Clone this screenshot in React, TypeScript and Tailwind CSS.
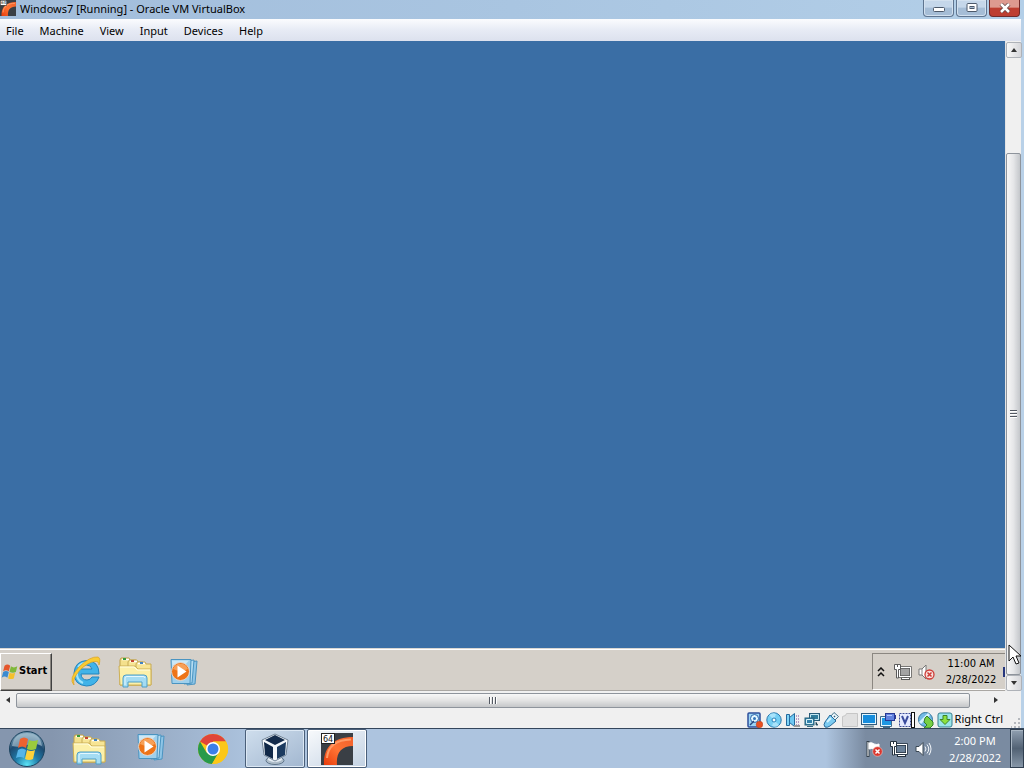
import type { ReactNode } from "react";

const menus = ["File", "Machine", "View", "Input", "Devices", "Help"];

function MachineIcon({ className }: { className: string }) {
  return (
    <svg viewBox="0 0 32 32" className={className} aria-hidden="true">
      <defs>
        <linearGradient id="pipe" x1="0" y1="1" x2="1" y2="0">
          <stop offset="0" stopColor="#e83c0c" />
          <stop offset="0.5" stopColor="#ff7434" />
          <stop offset="1" stopColor="#f0602c" />
        </linearGradient>
      </defs>
      <rect width="32" height="32" fill="#3a3f45" />
      <path d="M3 32C2 15 12 4 32 4v9C20 13 15 20 16 32z" fill="url(#pipe)" />
      <path d="M6 25C7 13 15 7 30 6.500" fill="none" stroke="#ff9a66" strokeWidth="2" />
      <rect x="0.5" y="0.5" width="13" height="10" fill="#fff" stroke="#222" />
      <text x="2" y="8.500" fontSize="8" fontFamily="DejaVu Sans, sans-serif" fill="#111">
        64
      </text>
    </svg>
  );
}

function FolderIcon() {
  return (
    <svg viewBox="0 0 34 32" className="h-8 w-[34px]" aria-hidden="true">
      <path d="M2 29V4l1-2h8l1 2h6v25z" fill="#f4e08c" stroke="#bd9f4c" />
      <path d="M10 29V6l1-2h8l1 2h5v23z" fill="#f7e594" stroke="#c7aa55" />
      <path d="M18 29V8l1-2h8l1 2h5v21z" fill="#f7e594" stroke="#c7aa55" />
      <path d="M4 3.500h7M12 5.500h7M20 7.500h7" stroke="#fff" strokeWidth="1.500" />
      <path d="M5 3h3" stroke="#37993b" strokeWidth="2" />
      <path d="M13 5h3" stroke="#c34731" strokeWidth="2" />
      <path d="M22 7h3" stroke="#3f83c4" strokeWidth="2" />
      <path d="M1 10h16l3 3h13v16H2z" fill="#fcf0a9" stroke="#cdb057" />
      <path d="M2 11h14l3 3h13" fill="none" stroke="#fffde0" />
      <path d="M5 31v-9q0-3 3-3h18q3 0 3 3v9h-5v-5H10v5z" fill="#a4dcf3" stroke="#4f9fc7" />
      <path d="M7 29v-7q0-1.500 2-1.500h16q2 0 2 1.500" fill="none" stroke="#e4f8ff" />
    </svg>
  );
}

function MediaIcon() {
  return (
    <svg viewBox="0 0 30 28" className="h-7 w-[30px]" aria-hidden="true">
      <path d="M20 4l8-1-2 23-8 1z" fill="#8fc5e6" stroke="#4a94c1" />
      <path d="M17 3l8-1-2 23-8 1z" fill="#b5dcf2" stroke="#4a94c1" />
      <path d="M2 1.500h20l-1 24H3z" fill="#9fd0ec" stroke="#4a94c1" />
      <path d="M3 2.500h17L4 20z" fill="#cbe8f7" />
      <circle cx="11.500" cy="13.500" r="9" fill="#ee7418" stroke="#e3d6cc" />
      <path d="M4 11a8 8 0 0 1 15 0q-7 4-15 0" fill="#f7a058" />
      <path d="M8.500 7.500v12l9-6z" fill="#fff" />
    </svg>
  );
}

function ExplorerIcon() {
  return (
    <svg viewBox="0 0 30 32" className="h-8 w-[30px]" aria-hidden="true">
      <path
        d="M28 18H10q.5 6 6 6 3.500 0 5-3h7q-3 9-12.500 9Q3 29 3 17 4 5 16 4.500 28 5 28 18zM21 13q-1-4-5.500-4T10 13z"
        fill="#41b3e8"
        stroke="#2384bd"
        fillRule="evenodd"
      />
      <path d="M7 11Q11 6 17 7M6 16q-1 8 6 11" fill="none" stroke="#a0e4fa" strokeWidth="2" />
      <path
        d="M3 29Q-3 23 8 11 19 0 27 1q3 1 1 8 0-4-4-3.500Q17 6 9 14 1 23 3 29z"
        fill="#f9cb32"
        stroke="#dba01c"
        strokeWidth="0.700"
      />
    </svg>
  );
}

function WindowsFlag({ className }: { className: string }) {
  return (
    <svg viewBox="0 0 24 22" className={className} aria-hidden="true">
      <path d="M5 2q4-3 8 0l-2 8q-4-3-8 0z" fill="#e5562b" />
      <path d="M14 3q4 3 9 0l-2 8q-4 2-9 0z" fill="#7fb83a" />
      <path d="M3 11q4-3 8 0l-2 8q-4-3-8 0z" fill="#3b8bd0" />
      <path d="M12 12q4 2 8 0l-2 8q-4 2-8 0z" fill="#f5c02c" />
    </svg>
  );
}

function StartOrb() {
  return (
    <svg viewBox="0 0 38 38" className="h-[38px] w-[38px]" aria-hidden="true">
      <defs>
        <radialGradient id="orb" cx="0.5" cy="0.95" r="0.85">
          <stop offset="0" stopColor="#5be3f6" />
          <stop offset="0.4" stopColor="#1f7ba8" />
          <stop offset="0.75" stopColor="#1d4a70" />
          <stop offset="1" stopColor="#6d94ad" />
        </radialGradient>
      </defs>
      <circle cx="19" cy="19" r="17.500" fill="url(#orb)" stroke="#1c4460" />
      <path d="M4 16Q6 3 19 3t15 13q-8-4-15-1-8 3-15 1z" fill="#b3ccd9" opacity="0.6" />
      <path d="M12 9q4-3 8 0l-2 9q-4-3-8 0z" fill="#ee6230" />
      <path d="M21 10q4 2 9 0l-2 9q-5 2-9 0z" fill="#9bca3c" />
      <path d="M10 20q4-3 8 0l-2 8q-4-2-8 0z" fill="#55b5e8" />
      <path d="M19 20q4 2 8 0l-2 9q-4 2-8 0z" fill="#fcd13b" />
    </svg>
  );
}

function ChromeIcon() {
  return (
    <svg viewBox="0 0 32 32" className="h-8 w-8" aria-hidden="true">
      <circle cx="16" cy="16" r="15" fill="#fbc719" />
      <path d="M16 16L3 8.500A15 15 0 0 1 29 8.500H16z" fill="#e0453a" />
      <path d="M3 8.500A15 15 0 0 0 15 31l6.500-11.500L9.500 19.500z" fill="#279a4a" />
      <path d="M16 8.500h13A15 15 0 0 1 15 31l7.500-12z" fill="#fbc719" />
      <circle cx="16" cy="16" r="7" fill="#fff" />
      <circle cx="16" cy="16" r="5.500" fill="#3c7fe8" />
    </svg>
  );
}

function VirtualBoxIcon() {
  return (
    <svg viewBox="0 0 30 32" className="h-8 w-[30px]" aria-hidden="true">
      <ellipse cx="15" cy="27.500" rx="9" ry="4" fill="#aebdca" stroke="#60768b" />
      <ellipse cx="15" cy="26" rx="7" ry="3" fill="#e6eef5" />
      <path d="M15 1l13 6-2 15-11 6-11-6L2 7z" fill="#f4f8fb" stroke="#718497" />
      <path d="M15 2l10 5-10 5L5 7z" fill="#142c4c" />
      <path d="M4 9l9 5v12l-8-4z" fill="#102848" />
      <path d="M26 9l-9 5v12l8-4z" fill="#1c3b60" />
    </svg>
  );
}

function NetworkIcon({ light = false }: { light?: boolean }) {
  const ink = light ? "#25323f" : "#5a5a5a";
  return (
    <svg viewBox="0 0 18 16" className="h-4 w-[18px]" aria-hidden="true">
      <path d="M7 15h9M11.500 12v2" stroke={ink} strokeWidth="3" />
      <rect x="5.500" y="3.500" width="11" height="9" fill={light ? "#6b8199" : "#a3a3a3"} stroke={ink} strokeWidth="2.500" />
      <rect x="5.500" y="3.500" width="11" height="9" fill="none" stroke="#fff" />
      <path d="M8 14.500h7" stroke="#fff" />
      <path d="M0.500 0.500h6v5h-2V14H2.500V5.500h-2z" fill="#fff" stroke={ink} />
      <path d="M3.500 0v3" stroke={ink} />
    </svg>
  );
}

function MutedIcon() {
  return (
    <svg viewBox="0 0 17 16" className="h-4 w-[17px]" aria-hidden="true">
      <path d="M1 5h3l4-4v14l-4-4H1z" fill="#fff" stroke="#777" />
      <path d="M4 5v6" stroke="#888" />
      <circle cx="11.500" cy="10.500" r="4.500" fill="#f7dedb" stroke="#cf3c37" strokeWidth="1.300" />
      <path d="M9.500 8.500l4 4m0-4l-4 4" stroke="#cf3c37" strokeWidth="1.500" />
    </svg>
  );
}

function FlagIcon() {
  return (
    <svg viewBox="0 0 17 16" className="h-4 w-[17px]" aria-hidden="true">
      <path d="M2 0v16" stroke="#34404b" strokeWidth="3" />
      <path d="M2 1v14M3 2q3-1 5 1 3 1 5 0v6q-3 1-5-1-2-1-5 0z" fill="#fff" stroke="#fff" />
      <circle cx="11.500" cy="10.500" r="4.800" fill="#da352d" stroke="#f2c9c4" strokeWidth="0.600" />
      <path d="M9.500 8.500l4 4m0-4l-4 4" stroke="#fff" strokeWidth="1.500" />
    </svg>
  );
}

function SpeakerIcon() {
  return (
    <svg viewBox="0 0 17 16" className="h-4 w-[17px]" aria-hidden="true">
      <path d="M1 5.500h3l4-4v13l-4-4H1z" fill="#fff" stroke="#3b4854" />
      <path d="M10 5.500q2 2.500 0 5M12 3.500q3.500 4.500 0 9M14 2q4 6 0 12" fill="none" stroke="#f3f7fb" />
    </svg>
  );
}

// Status bar indicators, each drawn on a 16px grid.
const indicators: { name: string; icon: ReactNode }[] = [
  {
    name: "Hard disks",
    icon: (
      <>
        <rect x="1" y="1" width="12" height="14" rx="1" fill="#9cd5f5" stroke="#2e4f9b" strokeWidth="1.500" />
        <circle cx="7.500" cy="6.500" r="4" fill="#e4f7ff" stroke="#2863a8" />
        <circle cx="7.500" cy="6.500" r="1.500" fill="#3375bb" />
        <path d="M3 13l4-4" stroke="#2b477c" strokeWidth="1.500" />
        <circle cx="12.500" cy="12.500" r="3.300" fill="#e85020" stroke="#b8411f" strokeWidth="0.500" />
      </>
    ),
  },
  {
    name: "Optical drives",
    icon: (
      <>
        <circle cx="8" cy="8" r="7.200" fill="#74cff4" stroke="#2878ad" />
        <path d="M8 8L3 3q4-3 7-1zM8 8l5 5q-3 3-7 1z" fill="#a8e3fb" />
        <circle cx="8" cy="8" r="2" fill="#f4fdff" stroke="#2980b8" />
      </>
    ),
  },
  {
    name: "Audio",
    icon: (
      <>
        <path d="M1.500 2.500h3v11h-3z" fill="#80d3f6" stroke="#246a9e" />
        <path d="M4.500 5.500l5-4v13l-5-4z" fill="#6fc8f2" stroke="#246a9e" />
        <path d="M11.500 3v10M13.500 3v10" stroke="#b79ac4" strokeDasharray="2 1" />
        <path d="M9 14h6" stroke="#999" strokeWidth="2" />
      </>
    ),
  },
  {
    name: "Network",
    icon: (
      <>
        <rect x="5.500" y="1.500" width="10" height="7" fill="#2f7d9c" stroke="#285c79" />
        <path d="M6.500 2.500h8v5h-8z" fill="none" stroke="#c5e8f2" />
        <rect x="1" y="6" width="9" height="7" fill="#3583ac" stroke="#276078" />
        <path d="M2.500 7.500h6v4h-6z" fill="none" stroke="#d8f4fa" />
        <path d="M3 14.500h6M12 10v3h2" stroke="#356b82" />
      </>
    ),
  },
  {
    name: "USB",
    icon: (
      <>
        <path d="M8 4l3-3.500 4.500 4L12 8z" fill="#eef6fa" stroke="#47758c" />
        <path d="M7 3l6 6-6 5q-3 2-5 1-2-2 0-5z" fill="#7ccbf1" stroke="#286b9b" />
        <path d="M4 10l4-4" stroke="#d3f4ff" strokeWidth="2" />
        <path d="M11 4l1 1" stroke="#325b75" strokeWidth="1.500" />
      </>
    ),
  },
  {
    name: "Shared folders",
    icon: <path d="M0.500 4.500l3-1 1-2h11v13H0.500z" fill="#e0e0e0" stroke="#c6c6c6" />,
  },
  {
    name: "Display",
    icon: (
      <>
        <rect x="0.500" y="1.500" width="15" height="11" fill="#e3f7ff" stroke="#315b7d" />
        <rect x="2" y="3" width="12" height="8" fill="#168ddd" />
        <path d="M3 14.500h10" stroke="#77909d" strokeWidth="2" />
      </>
    ),
  },
  {
    name: "Recording",
    icon: (
      <>
        <rect x="1.500" y="5.500" width="10" height="8" fill="#1f98e3" stroke="#e3f7ff" />
        <path d="M0.500 4.500h11v10h-11zM3 15.500h7" fill="none" stroke="#3f6b8c" />
        <rect x="5.500" y="1.500" width="9" height="7" fill="#6383df" stroke="#283994" />
        <path d="M7 3.500h5" stroke="#b3c4ff" />
        <path d="M15.500 3v4" stroke="#283994" />
      </>
    ),
  },
  {
    name: "Virtualization",
    icon: (
      <>
        <rect x="0.500" y="1.500" width="11" height="13" fill="#e4eaff" stroke="#3c4d99" strokeDasharray="2 1" />
        <path d="M3 4l3 7 3-7" fill="none" stroke="#394b9d" strokeWidth="2" />
        <rect x="12.500" y="0.500" width="3" height="15" fill="#fff" stroke="#111" />
      </>
    ),
  },
  {
    name: "Mouse integration",
    icon: (
      <>
        <circle cx="7.500" cy="7.500" r="7" fill="#73bae5" stroke="#35759b" />
        <path d="M2 11L11 2" stroke="#d5f2ff" strokeWidth="3" />
        <path d="M7 6l2-2 6 6v3l-3 3H6l3-3-3-3z" fill="#77d045" stroke="#348029" />
      </>
    ),
  },
  {
    name: "Host key",
    icon: (
      <>
        <rect x="1" y="1" width="14" height="14" rx="2" fill="#9be6ea" stroke="#367d91" />
        <path d="M6 3.500h4v4h3l-5 5-5-5h3z" fill="#8de23d" stroke="#3c8328" />
      </>
    ),
  },
];

function ScrollArrow({ direction }: { direction: "up" | "down" | "left" | "right" }) {
  const points = {
    up: "1,6 4,2 7,6",
    down: "1,2 7,2 4,6",
    left: "6,1 2,4 6,7",
    right: "2,1 6,4 2,7",
  };
  const framed = direction === "up" || direction === "down";
  return (
    <button
      aria-label={`Scroll ${direction}`}
      className={`flex h-4 w-4 shrink-0 items-center justify-center ${
        framed ? "rounded-xs border border-[#aeb2b8] bg-linear-to-r from-[#f8f8f8] to-[#d5d6da]" : ""
      }`}
    >
      <svg viewBox="0 0 8 8" className="h-2 w-2" aria-hidden="true">
        <polygon points={points[direction]} fill="#333" />
      </svg>
    </button>
  );
}

function TitleBar() {
  const button = "flex h-[17px] items-center justify-center rounded-b border border-t-0";
  const plain =
    "border-[#5f7590] bg-linear-to-b from-[#c5d7ea] from-45% to-[#a5bdd6] to-50% shadow-[inset_0_0_0_1px_#d3e1ef]";
  return (
    <header className="flex h-[19px] items-start bg-linear-to-r from-[#a2bddb] via-[#a9c5e1] to-[#b3cfe8]">
      <MachineIcon className="h-4 w-4" />
      <h1 className="flex-1 pl-1 text-[11px] leading-[18px]">Windows7 [Running] - Oracle VM VirtualBox</h1>
      <div className="flex gap-0.5 pr-1">
        <button aria-label="Minimize" className={`${button} ${plain} w-[31px]`}>
          <svg viewBox="0 0 12 6" className="mt-1 h-1.5 w-3" aria-hidden="true">
            <rect x="0.500" y="0.500" width="11" height="4" rx="1" fill="#fff" stroke="#4c596a" />
          </svg>
        </button>
        <button aria-label="Maximize" className={`${button} ${plain} w-[31px]`}>
          <svg viewBox="0 0 12 10" className="h-2.5 w-3" aria-hidden="true">
            <rect x="1" y="0.500" width="10" height="8" rx="1" fill="#fff" stroke="#4c596a" />
            <rect x="4" y="3.500" width="4" height="2" fill="#a5b9cf" stroke="#4c596a" />
          </svg>
        </button>
        <button
          aria-label="Close"
          className={`${button} w-[31px] border-[#712b2b] bg-linear-to-b from-[#dd9a90] from-45% to-[#bd3e31] to-50%`}
        >
          <svg viewBox="0 0 12 10" className="h-2.5 w-3" aria-hidden="true">
            <path d="M2 1l8 8m0-8L2 9" stroke="#5f4141" strokeWidth="4" />
            <path d="M2 1l8 8m0-8L2 9" stroke="#fff" strokeWidth="2.500" />
          </svg>
        </button>
      </div>
    </header>
  );
}

function GuestTaskbar() {
  return (
    <div className="flex h-[43px] shrink-0 items-center border-t border-b border-t-[#d9d7d3] border-b-[#aaa7a3] bg-[#d5d0c9] pt-1 font-['DejaVu_Sans_Condensed','DejaVu_Sans','Noto_Sans',sans-serif] shadow-[inset_0_1px_0_#fff]">
      <button className="flex h-[38px] w-[52px] items-center gap-px border border-t-white border-r-[#404040] border-b-[#404040] border-l-white text-[11px] font-bold shadow-[inset_-1px_-1px_0_#89857f]">
        <WindowsFlag className="h-4 w-[17px] shrink-0" />
        Start
      </button>
      <div className="flex items-center gap-[17px] pl-[19px]">
        <button aria-label="Internet Explorer">
          <ExplorerIcon />
        </button>
        <button aria-label="Windows Explorer">
          <FolderIcon />
        </button>
        <button aria-label="Windows Media Player">
          <MediaIcon />
        </button>
      </div>
      <div className="ml-auto flex h-[37px] items-center border border-r-0 border-t-[#8b8781] border-b-white border-l-[#8b8781] pl-1">
        <button aria-label="Show hidden icons" className="flex h-4 w-2 items-center">
          <svg viewBox="0 0 8 10" className="h-2.5 w-2" aria-hidden="true">
            <path d="M1 4l3-3 3 3M1 9l3-3 3 3" fill="none" stroke="#111" strokeWidth="1.500" />
          </svg>
        </button>
        <div className="flex items-center gap-1.5 pl-[9px]">
          <NetworkIcon />
          <MutedIcon />
        </div>
        <time className="w-[68px] pl-1 text-center text-[11px] leading-4">
          11:00 AM
          <br />
          2/28/2022
        </time>
        <div className="h-2.5 w-0.5 bg-[#26367d]" />
      </div>
    </div>
  );
}

function VerticalScrollbar() {
  return (
    <div className="flex w-4 flex-col border-l border-[#e4e4e4] bg-[#f0f0f0] pt-px">
      <ScrollArrow direction="up" />
      <div className="flex-[95]" />
      <div className="flex flex-[521] flex-col items-center justify-center gap-px rounded-xs border border-[#8e949c] bg-linear-to-r from-[#f7f7f7] via-[#e5e6e8] to-[#c4c7cb]">
        <span className="h-0.5 w-[7px] border-b border-white bg-[#535962]" />
        <span className="h-0.5 w-[7px] border-b border-white bg-[#535962]" />
        <span className="h-0.5 w-[7px] border-b border-white bg-[#535962]" />
      </div>
      <ScrollArrow direction="down" />
    </div>
  );
}

function HorizontalScrollbar() {
  return (
    <div className="flex h-[18px] items-center bg-[#f0f0f0] pr-[17px]">
      <ScrollArrow direction="left" />
      <div className="flex h-[15px] flex-[954] items-center justify-center gap-px rounded-xs border border-[#8e949c] bg-linear-to-b from-[#f7f7f7] via-[#e3e3e3] to-[#c5c7c9]">
        <span className="h-[7px] w-0.5 border-r border-white bg-[#535962]" />
        <span className="h-[7px] w-0.5 border-r border-white bg-[#535962]" />
        <span className="h-[7px] w-0.5 border-r border-white bg-[#535962]" />
      </div>
      <div className="flex-[18]" />
      <ScrollArrow direction="right" />
    </div>
  );
}

function StatusBar() {
  return (
    <footer className="flex h-[19px] items-center justify-end bg-[#f0f0f0] pt-0.5">
      <div className="flex gap-[3px]">
        {indicators.map((item) => (
          <button key={item.name} aria-label={item.name}>
            <svg viewBox="0 0 16 16" className="h-4 w-4" aria-hidden="true">
              {item.icon}
            </svg>
          </button>
        ))}
      </div>
      <span className="pl-0.5 text-[11px]">Right Ctrl</span>
      <svg viewBox="0 0 10 12" className="ml-2 h-3 w-2.5 self-end" aria-hidden="true">
        <path d="M8 2v2M8 6v2M8 10v2M4 6v2M4 10v2M0 10v2" stroke="#b5b8bd" strokeWidth="2" />
      </svg>
    </footer>
  );
}

function HostTaskbar() {
  const task = "flex h-[39px] w-[60px] items-center justify-center rounded-xs border border-[#4a5f79]";
  return (
    <nav className="flex h-10 shrink-0 items-center border-t border-[#34465c] bg-linear-to-r from-[#8596ae] from-5% via-[#adc4df] via-25% to-[#adc4df] to-80%">
      <button aria-label="Start" className="pl-2">
        <StartOrb />
      </button>
      <div className="flex pl-3">
        <button aria-label="Windows Explorer" className="flex w-[62px] justify-center">
          <FolderIcon />
        </button>
        <button aria-label="Windows Media Player" className="flex w-[62px] justify-center">
          <MediaIcon />
        </button>
        <button aria-label="Google Chrome" className="flex w-[62px] justify-center">
          <ChromeIcon />
        </button>
      </div>
      <div className="flex gap-0.5 pl-px">
        <button
          aria-label="Oracle VM VirtualBox Manager"
          className={`${task} bg-linear-to-br from-[#cfdeed] to-[#a2b7d0] shadow-[inset_0_0_0_1px_#dce8f4]`}
        >
          <VirtualBoxIcon />
        </button>
        <button
          aria-label="Windows7"
          className={`${task} bg-linear-to-br from-[#f8fafc] to-[#c3d2e3] shadow-[inset_0_0_0_1px_#fff]`}
        >
          <MachineIcon className="h-8 w-8" />
        </button>
      </div>
      <div className="ml-auto flex h-full items-center bg-linear-to-r from-transparent to-[#7a8ba1] to-20% pl-10 text-white">
        <div className="flex items-center gap-[7px]">
          <FlagIcon />
          <NetworkIcon light />
          <SpeakerIcon />
        </div>
        <time className="w-[78px] pl-2 text-center text-[11px] leading-[17px]">
          2:00 PM
          <br />
          2/28/2022
        </time>
        <button
          aria-label="Show desktop"
          className="h-full w-3.5 border border-[#303f50] bg-linear-to-b from-[#91a0b1] via-[#526274] to-[#8797a8] shadow-[inset_1px_1px_0_#aab7c4]"
        />
      </div>
    </nav>
  );
}

export default function App() {
  return (
    <div className="flex min-h-screen cursor-default flex-col overflow-hidden bg-[#b9d1e8] font-['Noto_Sans','Open_Sans',sans-serif] text-black">
      <TitleBar />
      <div className="relative mr-[3px] flex flex-1 flex-col">
        <nav className="flex h-[22px] items-center gap-4 bg-linear-to-b from-[#fbfcfe] via-[#e7ebf5] to-[#dce1ee] pt-0.5 pl-1.5 text-[11px]">
          {menus.map((menu) => (
            <button key={menu}>{menu}</button>
          ))}
        </nav>
        <div className="flex flex-1">
          <main className="flex flex-1 flex-col bg-[#3a6ea5]">
            <div className="flex-1" />
            <GuestTaskbar />
          </main>
          <VerticalScrollbar />
        </div>
        <HorizontalScrollbar />
        <StatusBar />
        <svg viewBox="0 0 14 22" className="absolute right-0 bottom-[62px] h-[22px] w-3.5" aria-hidden="true">
          <path d="M2 1v16l4-4 3 7 3-1-3-7h5z" fill="#fff" stroke="#111" />
        </svg>
      </div>
      <HostTaskbar />
    </div>
  );
}
